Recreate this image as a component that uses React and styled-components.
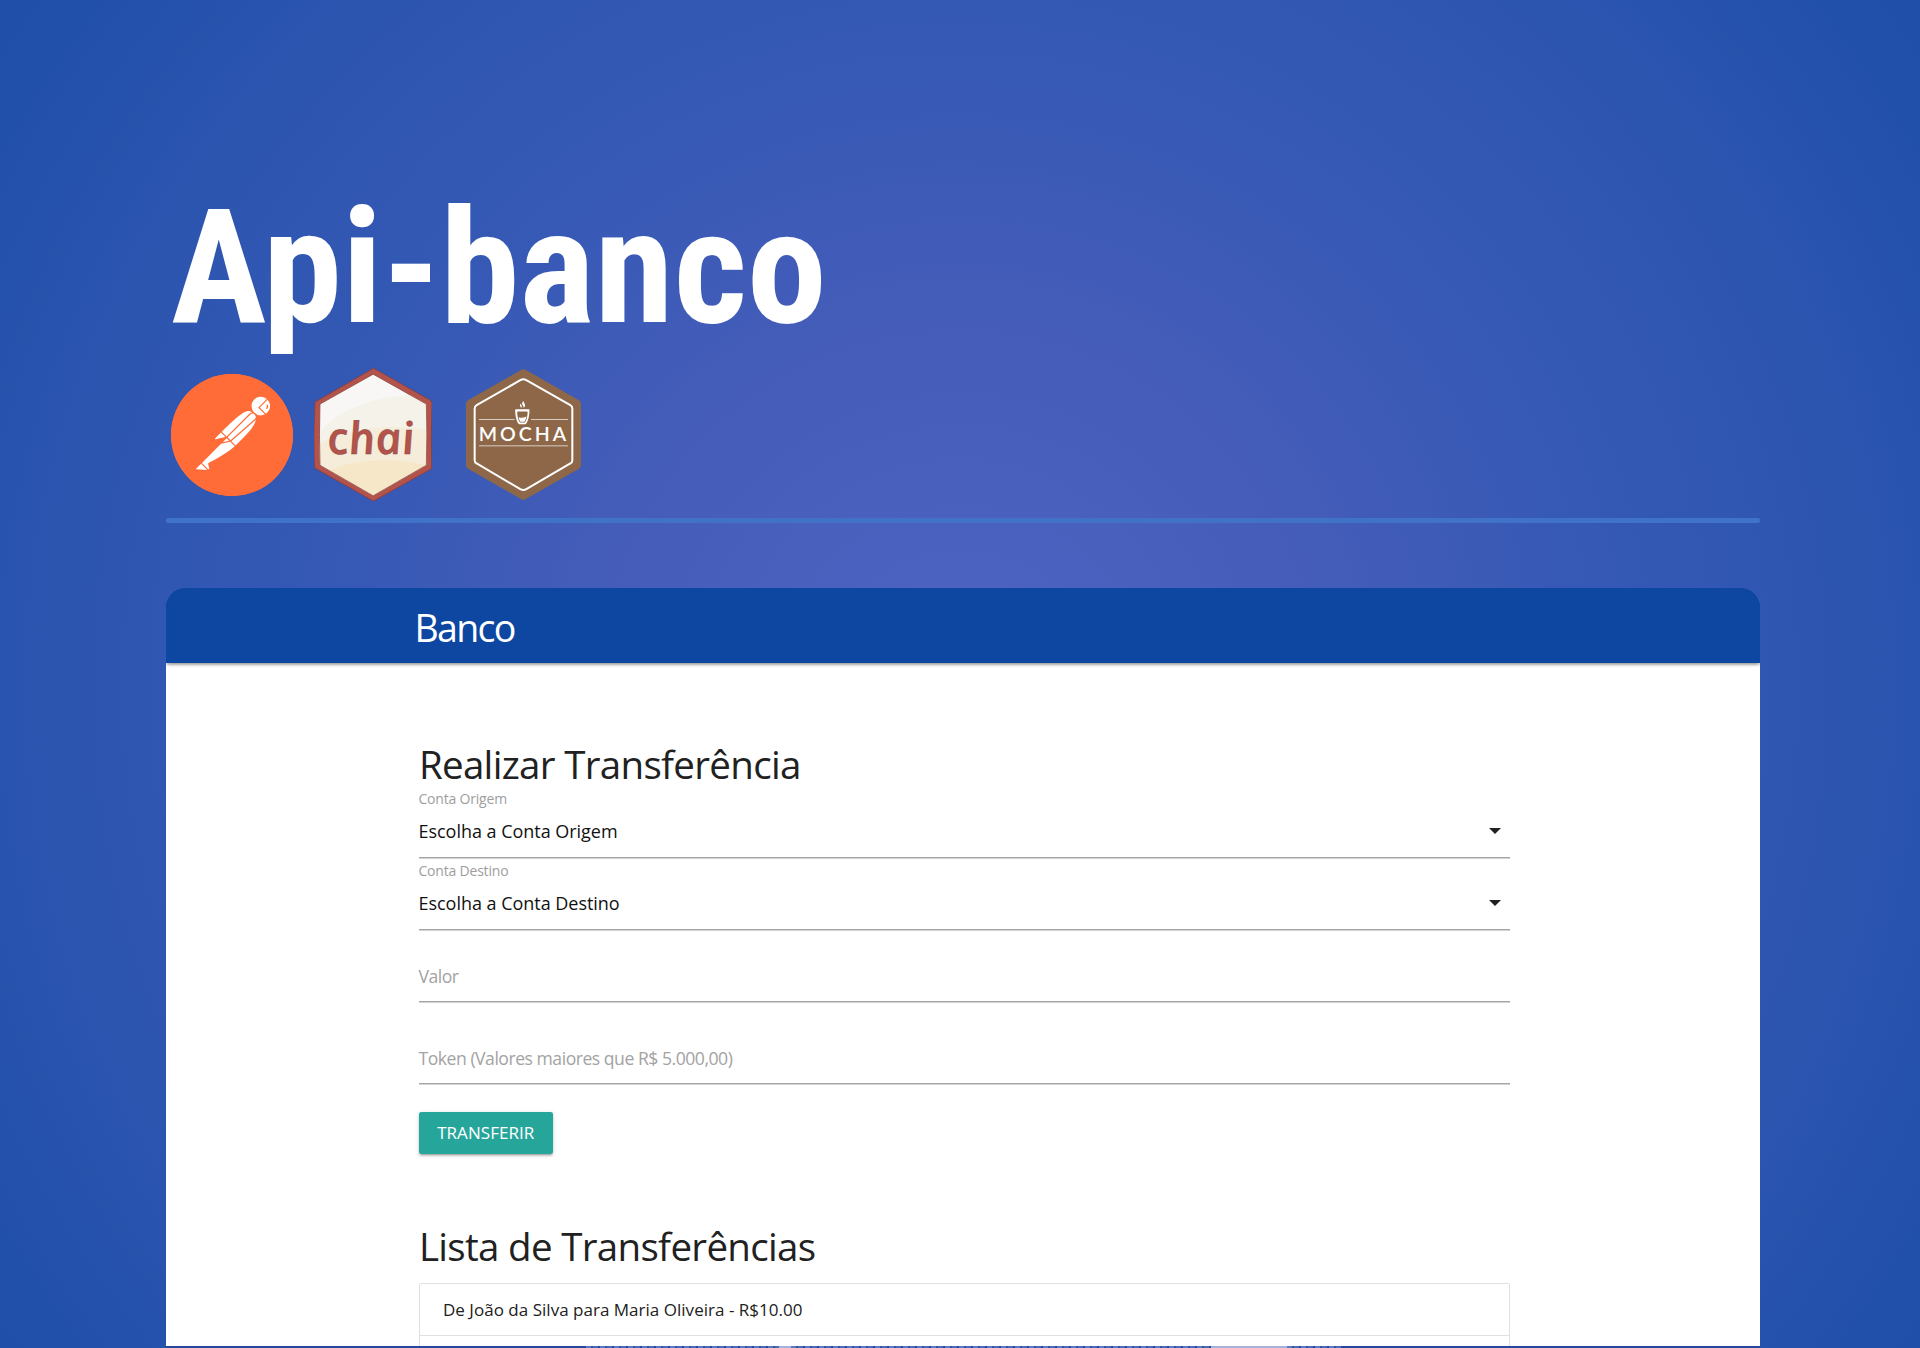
import React from 'react';
import styled, { createGlobalStyle } from 'styled-components';
import { SiPostman, SiMocha } from 'react-icons/si';

const GlobalStyle = createGlobalStyle`
  *, *::before, *::after { box-sizing: border-box; }
  body { margin: 0; overflow: hidden; }
`;

const uiFont = '"Open Sans", "Noto Sans", sans-serif';

const Page = styled.main`
  width: 1920px;
  height: 1348px;
  padding: 188px 160px 0 166px;
  overflow: hidden;
  background: radial-gradient(
    circle at 50% 51%,
    #4f64c3 0,
    #455db9 360px,
    #3559b5 640px,
    #2e56b1 860px,
    #1f4fa9 1150px
  );
  font-family: ${uiFont};
  color: #212121;
`;

const Title = styled.h1`
  margin: 0 0 19px 5px;
  font: 700 160px/160px "Roboto Condensed", Roboto, sans-serif;
  color: #fff;
`;

const Logos = styled.div`
  display: flex;
  align-items: center;
  height: 135px;
  margin-left: 5px;
`;

const PostmanDisc = styled.div`
  width: 122px;
  height: 122px;
  margin-right: 21px;
  border-radius: 50%;
  background: radial-gradient(circle, #fff 54px, #ff6c37 55px);
  color: #ff6c37;
  svg { display: block; }
`;

const ChaiSvg = styled.svg`
  width: 118px;
  height: 135px;
  margin-right: 34px;
`;

const MochaSvg = styled.svg`
  width: 115px;
  height: 131px;
`;

const Divider = styled.hr`
  width: 1594px;
  height: 5px;
  margin: 16px 0 65px;
  border: 0;
  border-radius: 2px;
  background: #4073c8;
`;

const Card = styled.section`
  display: flex;
  flex-direction: column;
  width: 1594px;
  height: 760px;
  border-radius: 20px 20px 0 0;
  overflow: hidden;
  background: linear-gradient(#0d47a1 75px, #fff 75px);
`;

const NavBar = styled.header`
  display: flex;
  align-items: center;
  flex: none;
  height: 75px;
  padding: 3px 0 0 248.5px;
  background: #0d47a1;
  box-shadow: 0 2px 2px rgba(0, 0, 0, 0.22), 0 3px 4px -2px rgba(0, 0, 0, 0.25);
  color: #fff;
  font-size: 37.5px;
  letter-spacing: -1.7px;
`;

const Content = styled.div`
  flex: 1;
  min-height: 0;
  width: 1344px;
  padding: 79px 0 0 252.5px;
  overflow: hidden;
`;

const Heading = styled.h2`
  margin: ${(p) => p.$top}px 0 0 0.4px;
  font-size: 38.5px;
  font-weight: 400;
  line-height: 44px;
  letter-spacing: -0.68px;
`;

const Field = styled.div`
  display: flex;
  flex-direction: column;
  justify-content: flex-end;
  height: ${(p) => p.$height}px;
`;

const Label = styled.label`
  margin-bottom: -4px;
  font-size: 14px;
  line-height: 20px;
  letter-spacing: -0.2px;
  color: #9e9e9e;
`;

const Control = styled.div`
  display: flex;
  align-items: center;
  justify-content: space-between;
  height: 53px;
  padding: ${(p) => (p.$placeholder ? 1 : 0)}px 9.5px 0 0;
  border-bottom: 1px solid #a6a6a6;
  box-shadow: 0 1px 0 #d2d2d2;
  font-size: ${(p) => (p.$placeholder ? 17.6 : 18)}px;
  letter-spacing: ${(p) => (p.$placeholder ? -0.48 : -0.03)}px;
  color: ${(p) => (p.$placeholder ? '#a3a3a3' : '#111')};
`;

const Caret = styled.span`
  border: 6px solid transparent;
  border-top-color: #212121;
  border-bottom: 0;
`;

const SubmitButton = styled.button`
  display: flex;
  align-items: center;
  justify-content: center;
  width: 134.5px;
  height: 42.5px;
  margin-top: 27.5px;
  padding: 0;
  border: 0;
  border-radius: 2.3px;
  background: #26a69a;
  box-shadow: 0 2px 2px rgba(0, 0, 0, 0.16), 0 3px 1px -2px rgba(0, 0, 0, 0.14), 0 1px 5px rgba(0, 0, 0, 0.14);
  color: #fff;
  font: 400 17px ${uiFont};
  letter-spacing: 0.05px;
`;

const List = styled.ul`
  margin: 15.4px 0 0;
  padding: 0;
  list-style: none;
  border: 1px solid #e0e0e0;
  border-radius: 2px;
`;

const ListItem = styled.li`
  display: flex;
  align-items: center;
  height: 52px;
  padding-left: 23.5px;
  border-bottom: 1px solid #e0e0e0;
  font-size: 17px;
  letter-spacing: 0.02px;
`;

const FooterBar = styled.footer`
  display: flex;
  flex: none;
  height: 2px;
  padding-left: 420px;
  background: #24489b;
`;

const FooterRun = styled.span`
  width: ${(p) => p.$width}px;
  background: ${(p) =>
    p.$solid
      ? '#a3b3da'
      : 'repeating-linear-gradient(90deg, #5b7bc0 0 5px, #2f559f 5px 7px, #4a6cb4 7px 12px, #24489b 12px 14px)'};
`;

function ChaiLogo() {
  return (
    <ChaiSvg viewBox="42 20 355 405">
      <defs>
        <clipPath id="chaiInner">
          <path d="M60 131 L220 41 L380 131 Q383 223 380 315 L220 407 L60 315 Q57 223 60 131Z" />
        </clipPath>
      </defs>
      <path
        d="M221 23 L393 120 Q398 125 397 132 Q393 223 396 322 L393 327 L221 423 L47 325 L43 320 Q39 223 45 125Z"
        fill="#b3534a"
        stroke="#7e4350"
        strokeWidth="3"
        strokeLinejoin="round"
      />
      <g clipPath="url(#chaiInner)">
        <rect x="40" y="20" width="360" height="410" fill="#f8f7f5" />
        <path d="M50 225 Q150 100 390 102 V430 H50Z" fill="#f5f2e9" />
        <path d="M50 255 Q190 178 390 209 V430 H50Z" fill="#f5edda" />
        <path d="M50 345 Q210 270 390 318 V430 H50Z" fill="#f7e7c9" />
      </g>
      <path
        d="M60 131 L220 41 L380 131 Q383 223 380 315 L220 407 L60 315 Q57 223 60 131Z"
        fill="none"
        stroke="#8f4a45"
        strokeWidth="2.5"
      />
      <text
        transform="translate(87 280) skewX(8)"
        fontFamily="Open Sans, sans-serif"
        fontStyle="italic"
        fontWeight="600"
        fontSize="134"
        textLength="262"
        lengthAdjust="spacing"
        fill="#b3534a"
        stroke="#8a4640"
        strokeWidth="1.5"
      >
        chai
      </text>
    </ChaiSvg>
  );
}

function MochaLogo() {
  return (
    <MochaSvg viewBox="33 27 345 392">
      <path
        d="M205.500 39 L366 131 V315 L205.500 407 L45 315 V131Z"
        fill="#8d6748"
        stroke="#8d6748"
        strokeWidth="24"
        strokeLinejoin="round"
      />
      <path
        d="M196 60 Q205 54 214 60 L346 135 Q352 138 352 145 V300 Q352 307 346 310 L214 387 Q205 392 196 387 L65 310 Q59 307 59 300 V145 Q59 138 65 135Z"
        fill="none"
        stroke="#fff"
        strokeWidth="6"
      />
      <path d="M72 178H179M228 178H339M72 257H339" stroke="#d9cdc2" strokeWidth="3" />
      <SiMocha x="166.500" y="122" size="71" color="#fff" />
      <text
        x="71"
        y="243"
        fontFamily="Lato, sans-serif"
        fontWeight="600"
        fontSize="58"
        letterSpacing="9"
        textLength="272"
        lengthAdjust="spacingAndGlyphs"
        fill="#fff"
      >
        MOCHA
      </text>
    </MochaSvg>
  );
}

function SelectField({ label, value }) {
  return (
    <Field $height={72}>
      <Label>{label}</Label>
      <Control>
        {value}
        <Caret />
      </Control>
    </Field>
  );
}

export default function App() {
  return (
    <>
      <GlobalStyle />
      <Page>
        <Title>Api-banco</Title>
        <Logos>
          <PostmanDisc>
            <SiPostman size={122} />
          </PostmanDisc>
          <ChaiLogo />
          <MochaLogo />
        </Logos>
        <Divider />
        <Card>
          <NavBar>Banco</NavBar>
          <Content>
            <Heading $top={0}>Realizar Transferência</Heading>
            <SelectField label="Conta Origem" value="Escolha a Conta Origem" />
            <SelectField label="Conta Destino" value="Escolha a Conta Destino" />
            <Field $height={72}>
              <Control $placeholder>Valor</Control>
            </Field>
            <Field $height={82}>
              <Control $placeholder>Token (Valores maiores que R$ 5.000,00)</Control>
            </Field>
            <SubmitButton>TRANSFERIR</SubmitButton>
            <Heading $top={69.5}>Lista de Transferências</Heading>
            <List>
              <ListItem>De João da Silva para Maria Oliveira - R$10.00</ListItem>
              <ListItem />
            </List>
          </Content>
          <FooterBar>
            <FooterRun $width={193} />
            <FooterRun $width={12} $solid />
            <FooterRun $width={420} />
            <FooterRun $width={76} $solid />
            <FooterRun $width={54} />
          </FooterBar>
        </Card>
      </Page>
    </>
  );
}
